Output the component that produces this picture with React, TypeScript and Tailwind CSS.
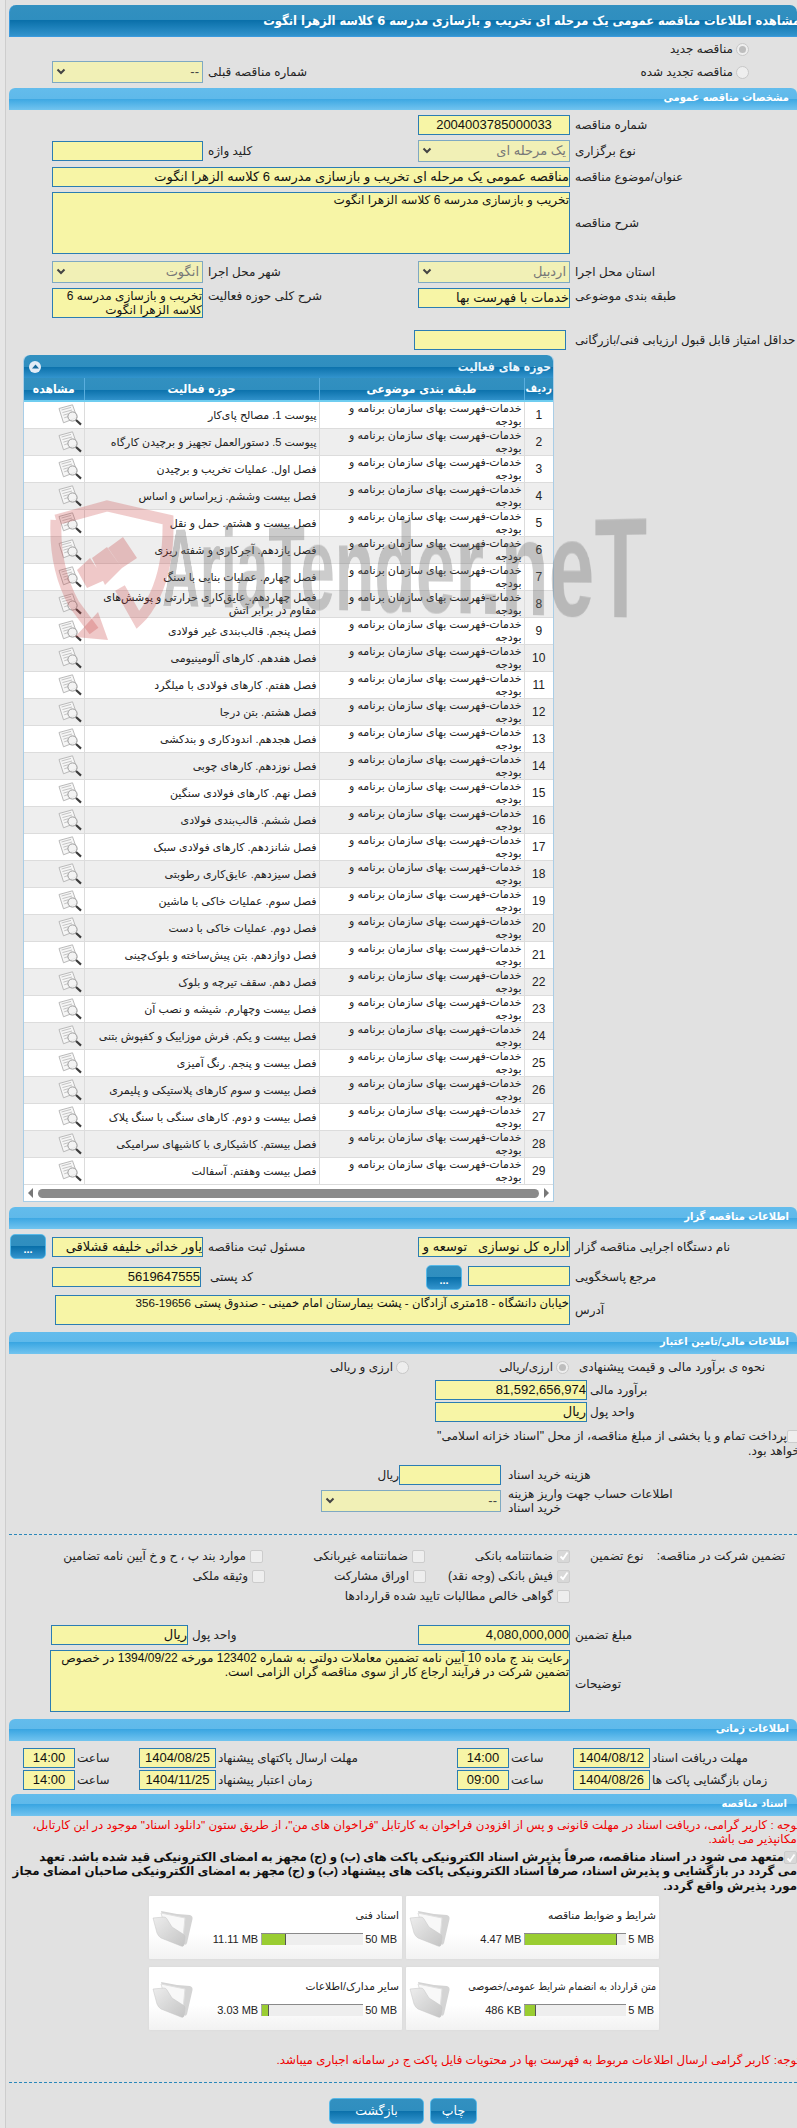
import type { ReactNode } from "react";

/* Tender detail page (read-only form). Everything is RTL, the right edge of the
   page slightly clips the long lines, same as the original. */

const bands = {
  dark: "bg-[linear-gradient(#3290c0_0%,#2f8ebf_50%,#0a70aa_50%,#3394cd_100%)]",
  light: "bg-[linear-gradient(#63bcec_0%,#5fb9ea_50%,#3aa6e2_50%,#6dc1ee_100%)]",
};

const narrow = "font-['DejaVu_Sans_Condensed','DejaVu_Sans',sans-serif] font-bold";

const rows = [
  "پیوست 1. مصالح پای‌کار",
  "پیوست 5. دستورالعمل تجهیز و برچیدن کارگاه",
  "فصل اول. عملیات تخریب و برچیدن",
  "فصل بیست وششم. زیراساس و اساس",
  "فصل بیست و هشتم. حمل و نقل",
  "فصل یازدهم. آجرکاری و شفته ریزی",
  "فصل چهارم. عملیات بنایی با سنگ",
  "فصل چهاردهم. عایق‌کاری حرارتی و پوشش‌های مقاوم در برابر آتش",
  "فصل پنجم. قالب‌بندی غیر فولادی",
  "فصل هفدهم. کارهای آلومینیومی",
  "فصل هفتم. کارهای فولادی با میلگرد",
  "فصل هشتم. بتن درجا",
  "فصل هجدهم. اندودکاری و بندکشی",
  "فصل نوزدهم. کارهای چوبی",
  "فصل نهم. کارهای فولادی سنگین",
  "فصل ششم. قالب‌بندی فولادی",
  "فصل شانزدهم. کارهای فولادی سبک",
  "فصل سیزدهم. عایق‌کاری رطوبتی",
  "فصل سوم. عملیات خاکی با ماشین",
  "فصل دوم. عملیات خاکی با دست",
  "فصل دوازدهم. بتن پیش‌ساخته و بلوک‌چینی",
  "فصل دهم. سقف تیرچه و بلوک",
  "فصل بیست وچهارم. شیشه و نصب آن",
  "فصل بیست و یکم. فرش موزاییک و کفپوش بتنی",
  "فصل بیست و پنجم. رنگ آمیزی",
  "فصل بیست و سوم کارهای پلاستیکی و پلیمری",
  "فصل بیست و دوم. کارهای سنگی با سنگ پلاک",
  "فصل بیستم. کاشیکاری با کاشیهای سرامیکی",
  "فصل بیست وهفتم. آسفالت",
];

const files = [
  { name: "شرایط و ضوابط مناقصه", used: "4.47 MB", max: "5 MB", pct: 91 },
  { name: "اسناد فنی", used: "11.11 MB", max: "50 MB", pct: 24 },
  { name: "متن قرارداد به انضمام شرایط عمومی/خصوصی", used: "486 KB", max: "5 MB", pct: 11, tight: true },
  { name: "سایر مدارک/اطلاعات", used: "3.03 MB", max: "50 MB", pct: 8 },
];

function Label({ children, className = "" }: { children: ReactNode; className?: string }) {
  return <div className={`text-left text-[12px] leading-[14px] text-[#222] ${className || "pl-[5px]"}`}>{children}</div>;
}

function Field({ children, className = "", center = false }: { children?: ReactNode; className?: string; center?: boolean }) {
  return (
    <div className={`h-[20px] overflow-hidden border border-[#2b7db3] bg-[#f7f5a6] text-[13px] leading-[18px] whitespace-pre text-[#111] ${center ? "text-center" : "text-right"} ${className}`}>
      {children}
    </div>
  );
}

function Area({ children, className = "" }: { children?: ReactNode; className?: string }) {
  return (
    <div className={`overflow-hidden border border-[#2b7db3] bg-[#f7f5a6] text-right leading-[14px] text-[#111] ${className}`}>
      {children}
    </div>
  );
}

function Select({ value, className = "", muted = false }: { value: string; className?: string; muted?: boolean }) {
  return (
    <div className={`flex h-[22px] items-center justify-between border border-[#7fa9c2] bg-[#f1f0b6] pr-[3px] pl-[3px] text-[13px] ${muted ? "text-[#777]" : "text-[#444]"} ${className}`}>
      <span>{value}</span>
      <svg width="10" height="7" viewBox="0 0 10 7" className="mb-[2px]">
        <path d="M1.5 1.5 5 5l3.5-3.5" fill="none" stroke="#444" strokeWidth="2" />
      </svg>
    </div>
  );
}

function Band({ title, className = "" }: { title: string; className?: string }) {
  return (
    <div className={`flex h-[22px] items-center rounded-t-[6px] border-b border-[#6fc3ee] text-[11px] text-white ${narrow} ${bands.light} ${className || "pr-[8px]"}`}>
      {title}
    </div>
  );
}

function Radio({ on = false }: { on?: boolean }) {
  return (
    <span className="flex size-[13px] shrink-0 items-center justify-center rounded-full border border-[#c8c8c8] bg-[#eeeeee]">
      {on && <span className="size-[7px] rounded-full bg-[#bdbdbd]" />}
    </span>
  );
}

function Check({ on = false, className = "" }: { on?: boolean; className?: string }) {
  return (
    <span className={`flex h-[13px] w-[13px] shrink-0 items-center justify-center rounded-[2px] border border-[#cccccc] ${on ? "bg-[#d8d8d8]" : "bg-[#eeeeee]"} ${className}`}>
      {on && (
        <svg width="10" height="10" viewBox="0 0 10 10">
          <path d="M1.5 5.5 4 8l4.5-6.5" fill="none" stroke="#fff" strokeWidth="1.8" />
        </svg>
      )}
    </span>
  );
}

function Opt({ on = false, children, className = "" }: { on?: boolean; children: ReactNode; className?: string }) {
  return (
    <div className={`flex items-center gap-[4px] text-[12px] text-[#222] ${className}`}>
      <Check on={on} />
      <span>{children}</span>
    </div>
  );
}

function BlueButton({ children, className = "" }: { children: ReactNode; className?: string }) {
  return (
    <button className={`rounded-[5px] border border-[#58b9e8] text-white ${bands.dark} ${className}`}>{children}</button>
  );
}

function DocIcon() {
  return (
    <svg width="24" height="22" viewBox="0 0 24 22" className="shrink-0">
      <path d="M1 4.5 14.5.8 19 13.5 5.5 18.8Z" fill="#f6f6f6" stroke="#b9b9b9" />
      <path d="M3.5 6 13 3.4M4.4 8.6 14 6M5.3 11.2 10.5 9.6M6.2 13.8 10 12.6" stroke="#c4c4c4" />
      <circle cx="14.5" cy="12.5" r="4.6" fill="#f2f2f2" fillOpacity="0.8" stroke="#9b9b9b" />
      <path d="m18 16 5 4.6" stroke="#3c3c3c" strokeWidth="2.2" />
    </svg>
  );
}

function FolderIcon() {
  return (
    <svg width="41" height="37" viewBox="0 0 41 37" className="shrink-0">
      <defs>
        <linearGradient id="folderFront" x1="0" y1="0" x2="1" y2="1">
          <stop offset="0" stopColor="#ededed" />
          <stop offset="1" stopColor="#c4c4c4" />
        </linearGradient>
      </defs>
      <path d="M9 1 25 4l13 1q3 1 2.5 4l-5.500 24q-1 3-3 1L14 20Z" fill="#d4d4d4" />
      <path d="M9 3 33 8l-2 20L14 20Z" fill="#f8f8f8" stroke="#e0e0e0" />
      <path d="M1 8 12 7q2 0 3 2l5 8 11 7q2 1 2 3l-1 8q-.5 2-3 1L9 28Q6 26 5 23Z" fill="url(#folderFront)" stroke="#c4c4c4" strokeWidth="0.5" />
    </svg>
  );
}

function FileCard({ name, used, max, pct, tight = false }: { name: string; used: string; max: string; pct: number; tight?: boolean }) {
  return (
    <div className="flex h-[63px] w-[253px] items-end gap-[3px] rounded-[1px] bg-[linear-gradient(#ffffff_60%,#f2f2f2_100%)] pr-[3px] pb-[12px] pl-[3px] shadow-[0_0_2px_#d5d5d5]">
      <div className="mb-[2px] min-w-0 flex-1">
        <div className={`text-right leading-[14px] whitespace-nowrap text-[#222] ${tight ? "font-['DejaVu_Sans_Condensed','DejaVu_Sans',sans-serif] text-[10.5px]" : "text-[10.7px]"}`}>
          {name}
        </div>
        <div className="mt-[11px] flex items-center gap-[2px] pr-[2px] text-[11px] leading-[12px] text-[#222]">
          <span dir="ltr">{max}</span>
          <div dir="ltr" className="ml-[1px] h-[12px] w-[102px] shrink-0 border-t border-[#8a8a8a] bg-[#eeeeee]">
            <div className="h-full border-x border-l-[#aaaaaa] border-r-[#555555] bg-[#9acd32]" style={{ width: `${pct}%` }} />
          </div>
          <span dir="ltr">{used}</span>
        </div>
      </div>
      <FolderIcon />
    </div>
  );
}

function Watermark() {
  return (
    <div className="pointer-events-none absolute top-[500px] left-[50px] h-[150px] w-[610px]">
      <svg width="125" height="147" viewBox="0 0 125 147" className="absolute top-0 left-0">
        <path
          d="M6 20 57 6l61 14q1 45-13 75-8 17-17 25L70 88M6 20q-2 48 18 84l20 27"
          fill="none"
          stroke="#c43a3a"
          strokeOpacity="0.26"
          strokeWidth="11"
        />
        <path
          d="M25 137 58 140 48 112ZM27 70 40 58 55 80 37 88ZM42 58 57 47 72 68 55 85ZM58 48 73 37 87 58 72 68Z"
          fill="#c43a3a"
          fillOpacity="0.28"
        />
      </svg>
      <div
        dir="ltr"
        className="absolute top-[5px] left-[-129px] origin-center text-[125px] leading-[125px] font-bold whitespace-nowrap text-[#6e6e6e]/35 [transform:perspective(700px)_rotateY(-22deg)_scaleX(0.57)]"
      >
        AriaTender.neT
      </div>
    </div>
  );
}

export default function App() {
  return (
    <div className="relative flex h-[2128px] w-[797px] overflow-hidden bg-[#e1e1e1] font-['Liberation_Sans','DejaVu_Sans',sans-serif]">
      <div className="h-full w-[6px] shrink-0 border-r border-[#cdcdcd] bg-[#e6e6e6]" />
      <div dir="rtl" className="ml-[3px] w-[788px] shrink-0 pt-[5px]">
        <div className={`flex h-[32px] items-center rounded-t-[7px] border-b border-l border-[#3a9ade] text-[12.800px] whitespace-nowrap text-white ${narrow} ${bands.dark}`}>
          <span className="-mr-[3px]">مشاهده اطلاعات مناقصه عمومی یک مرحله ای تخریب و بازسازی مدرسه 6 کلاسه الزهرا انگوت</span>
        </div>

        <div className="flex h-[24px] items-center gap-[3px] pr-[48px] text-[12px] text-[#222]">
          <Radio on />
          مناقصه جدید
        </div>
        <div className="grid h-[22px] grid-cols-[227px_152px_215px_151px] items-center">
          <div className="flex items-center gap-[3px] pr-[48px] text-[12px] text-[#222]">
            <Radio />
            مناقصه تجدید شده
          </div>
          <div />
          <Label>شماره مناقصه قبلی</Label>
          <Select value="--" />
        </div>

        <Band title="مشخصات مناقصه عمومی" className="mt-[5px] pr-[8px]" />

        <div className="mt-[5px] grid grid-cols-[227px_152px_215px_151px] items-center">
          <Label>شماره مناقصه</Label>
          <Field center>2004003785000033</Field>
        </div>
        <div className="mt-[5px] grid h-[22px] grid-cols-[227px_152px_215px_151px] items-center">
          <Label>نوع برگزاری</Label>
          <Select value="یک مرحله ای" muted />
          <Label>کلید واژه</Label>
          <Field />
        </div>
        <div className="mt-[5px] flex items-center">
          <Label className="w-[227px] shrink-0 pl-[5px]">عنوان/موضوع مناقصه</Label>
          <Field className="w-[518px]">مناقصه عمومی یک مرحله ای تخریب و بازسازی مدرسه 6 کلاسه الزهرا انگوت</Field>
        </div>
        <div className="mt-[5px] flex items-center">
          <Label className="w-[227px] shrink-0 pl-[5px]">شرح مناقصه</Label>
          <Area className="h-[62px] w-[518px] text-[12px]">تخریب و بازسازی مدرسه 6 کلاسه الزهرا انگوت</Area>
        </div>
        <div className="mt-[7px] grid h-[22px] grid-cols-[227px_152px_215px_151px] items-center">
          <Label>استان محل اجرا</Label>
          <Select value="اردبیل" muted />
          <Label>شهر محل اجرا</Label>
          <Select value="انگوت" muted />
        </div>
        <div className="mt-[5px] grid h-[30px] grid-cols-[227px_152px_215px_151px] items-start">
          <Label className="pt-[1px] pl-[5px]">طبقه بندی موضوعی</Label>
          <Field>خدمات با فهرست بها</Field>
          <Label className="pt-[1px] pl-[5px]">شرح کلی حوزه فعالیت</Label>
          <Area className="h-[30px] text-[12px]">تخریب و بازسازی مدرسه 6 کلاسه الزهرا انگوت</Area>
        </div>
        <div className="mt-[12px] grid grid-cols-[227px_156px] items-center">
          <Label className="pl-[5px] text-[11.5px]">حداقل امتیاز قابل قبول ارزیابی فنی/بازرگانی</Label>
          <Field className="mr-[4px] w-[152px]" />
        </div>

        {/* activity table */}
        <div className="mt-[5px] mr-[243px] w-[531px] rounded-t-[6px] border-x border-b border-[#a9cde6] bg-white">
          <div className={`flex h-[23px] items-center justify-between rounded-t-[6px] pr-[2px] pl-[5px] text-[12px] text-[#eaf6fd] ${narrow} ${bands.dark}`}>
            حوزه های فعالیت
            <span className="flex size-[12px] items-center justify-center rounded-full bg-[#e4ecf6]">
              <svg width="7" height="5" viewBox="0 0 7 5">
                <path d="M3.500 0.500 7 4.500H0Z" fill="#17699c" />
              </svg>
            </span>
          </div>
          <table className="w-full table-fixed border-collapse">
            <colgroup>
              <col className="w-[29px]" />
              <col className="w-[205px]" />
              <col className="w-[235px]" />
              <col />
            </colgroup>
            <thead>
              <tr className={`h-[23px] text-[12px] whitespace-nowrap text-white ${narrow} ${bands.dark}`}>
                <th className="border-b-2 border-l border-b-[#6fcdf0] border-l-[#5aaede] text-[11px] font-bold">ردیف</th>
                <th className="border-b-2 border-l border-b-[#6fcdf0] border-l-[#5aaede] font-bold">طبقه بندی موضوعی</th>
                <th className="border-b-2 border-l border-b-[#6fcdf0] border-l-[#5aaede] font-bold">حوزه فعالیت</th>
                <th className="border-b-2 border-b-[#6fcdf0] font-bold">مشاهده</th>
              </tr>
            </thead>
            <tbody>
              {rows.map((r, i) => (
                <tr key={r} className={`h-[27px] border-b border-[#dcdcdc] text-[#222] ${i % 2 ? "bg-[#eeeeee]" : "bg-white"}`}>
                  <td className="border-l border-[#dcdcdc] text-center text-[12px]">{i + 1}</td>
                  <td className="border-l border-[#dcdcdc] pr-[2px] pl-[4px] text-right text-[11px] leading-[13px]">
                    خدمات-فهرست بهای سازمان برنامه و
                    <br />
                    بودجه
                  </td>
                  <td className="border-l border-[#dcdcdc] pr-[2px] pl-[2px] text-right text-[11px] leading-[13px]">{r}</td>
                  <td className="p-0">
                    <div className="flex h-[26px] items-center justify-start pr-[2px]">
                      <DocIcon />
                    </div>
                  </td>
                </tr>
              ))}
            </tbody>
          </table>
          <div dir="ltr" className="flex h-[16px] items-center gap-[5px] px-[4px]">
            <span className="h-0 w-0 border-y-[5px] border-r-[5px] border-y-transparent border-r-[#777]" />
            <span className="h-[9px] flex-1 rounded-full bg-[#8a8a8a]" />
            <span className="h-0 w-0 border-y-[5px] border-l-[5px] border-y-transparent border-l-[#777]" />
          </div>
        </div>

        <Band title="اطلاعات مناقصه گزار" className="mt-[5px] pr-[8px]" />

        <div className="mt-[5px] grid h-[25px] grid-cols-[227px_152px_215px_151px_42px] items-center">
          <Label>نام دستگاه اجرایی مناقصه گزار</Label>
          <Field>اداره کل نوسازی   توسعه و تجهیز مدارس</Field>
          <Label>مسئول ثبت مناقصه</Label>
          <Field>یاور خدائی خلیفه قشلاقی</Field>
          <BlueButton className="mr-[6px] h-[25px] w-[36px] pt-[6px] text-[11px] font-bold">...</BlueButton>
        </div>
        <div className="mt-[5px] grid h-[26px] grid-cols-[227px_152px_215px_151px] items-center">
          <Label>مرجع پاسخگویی</Label>
          <div className="flex items-start gap-[6px]">
            <Field className="mt-[1px] w-[102px]" />
            <BlueButton className="h-[25px] w-[36px] pt-[6px] text-[11px] font-bold">...</BlueButton>
          </div>
          <Label className="pl-[7px]">کد پستی</Label>
          <Field className="mr-[2px] w-[149px]">5619647555</Field>
        </div>
        <div className="mt-[5px] flex items-center">
          <Label className="w-[227px] shrink-0 pl-[5px]">آدرس</Label>
          <Area className="h-[30px] w-[515px] text-[11.6px]">خیابان دانشگاه - 18متری آزادگان - پشت بیمارستان امام خمینی - صندوق پستی 19656-356</Area>
        </div>

        <Band title="اطلاعات مالی/تامین اعتبار" className="mt-[7px] pr-[8px]" />

        <div className="flex h-[26px] items-center text-[12px] text-[#222]">
          <div className="w-[227px] shrink-0 pr-[32px]">نحوه ی برآورد مالی و قیمت پیشنهادی</div>
          <div className="flex w-[161px] items-center gap-[3px] pr-[1px]">
            <Radio on />
            ارزی/ریالی
          </div>
          <div className="flex items-center gap-[3px]">
            <Radio />
            ارزی و ریالی
          </div>
        </div>
        <div className="flex items-center">
          <Label className="w-[210px] shrink-0 pl-[3px]">برآورد مالی</Label>
          <Field className="w-[152px]">81,592,656,974</Field>
        </div>
        <div className="mt-[2px] flex items-center">
          <Label className="w-[210px] shrink-0 pl-[3px]">واحد پول</Label>
          <Field className="w-[152px]">ریال</Field>
        </div>
        <div className="mt-[7px] -mr-[3px] h-[32px] text-[12.200px] leading-[15px] text-[#222]">
          <Check className="inline-flex align-middle" />
          پرداخت تمام و یا بخشی از مبلغ مناقصه، از محل "اسناد خزانه اسلامی"
          <br />
          خواهد بود.
        </div>
        <div className="mt-[4px] flex items-center">
          <Label className="w-[296px] shrink-0 pl-[7px]">هزینه خرید اسناد</Label>
          <Field className="w-[102px]" />
          <span className="text-[12px] text-[#222]">ریال</span>
        </div>
        <div className="mt-[5px] flex h-[22px] items-center">
          <Label className="w-[296px] shrink-0 pl-[7px]">
            اطلاعات حساب جهت واریز هزینه
            <br />
            خرید اسناد
          </Label>
          <Select value="--" className="w-[180px]" />
        </div>

        <div className="mt-[22px] border-t border-dashed border-[#2b88ba]" />

        <div className="mt-[11px] flex">
          <div className="flex h-[20px] w-[227px] shrink-0 items-center justify-between pr-[12px] pl-[20px] text-[12px] text-[#222]">
            <span>تضمین شرکت در مناقصه:</span>
            <span>نوع تضمین</span>
          </div>
          <div className="grid auto-rows-[20px] grid-cols-[145px_162px_1fr] items-center">
            <Opt on>ضمانتنامه بانکی</Opt>
            <Opt>ضمانتنامه غیربانکی</Opt>
            <Opt>موارد بند پ ، ح و خ آیین نامه تضامین</Opt>
            <Opt on>فیش بانکی (وجه نقد)</Opt>
            <Opt className="-mr-[1px]">اوراق مشارکت</Opt>
            <Opt className="-mr-[2px]">وثیقه ملکی</Opt>
            <Opt className="col-span-3">گواهی خالص مطالبات تایید شده قراردادها</Opt>
          </div>
        </div>

        <div className="mt-[19px] grid grid-cols-[227px_152px_230px_137px] items-center">
          <Label>مبلغ تضمین</Label>
          <Field>4,080,000,000</Field>
          <Label className="pl-[4px]">واحد پول</Label>
          <Field>ریال</Field>
        </div>
        <div className="mt-[5px] flex items-center">
          <Label className="w-[227px] shrink-0 pt-[6px] pl-[5px]">توضیحات</Label>
          <Area className="h-[62px] w-[520px] text-[12px]">
            رعایت بند ج ماده 10 آیین نامه تضمین معاملات دولتی به شماره 123402 مورخه 1394/09/22 در خصوص تضمین شرکت در فرآیند ارجاع کار از سوی مناقصه گران الزامی است.
          </Area>
        </div>

        <Band title="اطلاعات زمانی" className="mt-[7px] pr-[8px]" />

        <div className="mt-[7px] grid grid-cols-[147px_77px_64px_52px_241px_77px_64px_52px] items-center gap-y-[2px]">
          <Label className="pl-[2px]">مهلت دریافت اسناد</Label>
          <Field center>1404/08/12</Field>
          <Label className="pl-[2px]">ساعت</Label>
          <Field center>14:00</Field>
          <Label className="pl-[2px]">مهلت ارسال پاکتهای پیشنهاد</Label>
          <Field center>1404/08/25</Field>
          <Label className="pl-[2px]">ساعت</Label>
          <Field center>14:00</Field>
          <Label className="pl-[2px]">زمان بازگشایی پاکت ها</Label>
          <Field center>1404/08/26</Field>
          <Label className="pl-[2px]">ساعت</Label>
          <Field center>09:00</Field>
          <Label className="pl-[2px]">زمان اعتبار پیشنهاد</Label>
          <Field center>1404/11/25</Field>
          <Label className="pl-[2px]">ساعت</Label>
          <Field center>14:00</Field>
        </div>

        <Band title="اسناد مناقصه" className="mt-[4px] w-[786px] pr-[10px]" />

        <div className="mt-[2px] -mr-[3px] text-[11.800px] leading-[14px] whitespace-nowrap text-[#f00000]">
          توجه : کاربر گرامی، دریافت اسناد در مهلت قانونی و پس از افزودن فراخوان به کارتابل "فراخوان های من"، از طریق ستون "دانلود اسناد" موجود در این کارتابل،
          <br />
          امکانپذیر می باشد.
        </div>
        <div className="mt-[4px] h-[43px] text-[11.800px] leading-[14.300px] font-bold whitespace-nowrap text-[#111]">
          <Check on className="inline-flex align-middle" />
          متعهد می شود در اسناد مناقصه، صرفاً پذیرش اسناد الکترونیکی پاکت های (ب) و (ج) مجهز به امضای الکترونیکی قید شده باشد. تعهد
          <br />
          می گردد در بازگشایی و پذیرش اسناد، صرفاً اسناد الکترونیکی پاکت های پیشنهاد (ب) و (ج) مجهز به امضای الکترونیکی صاحبان امضای مجاز
          <br />
          مورد پذیرش واقع گردد.
        </div>

        <div className="mt-[3px] mr-[138px] grid w-[510px] grid-cols-2 gap-x-[4px] gap-y-[8px]">
          {files.map((f) => (
            <FileCard key={f.name} {...f} />
          ))}
        </div>

        <div className="mt-[22px] -mr-[3px] h-[16px] text-[11.800px] leading-[16px] whitespace-nowrap text-[#f00000]">
          توجه: کاربر گرامی ارسال اطلاعات مربوط به فهرست بها در محتویات فایل پاکت ج در سامانه اجباری میباشد.
        </div>

        <div className="mt-[14px] border-t border-dashed border-[#2b88ba]" />

        <div className="mt-[15px] mr-[320px] flex gap-[6px]">
          <BlueButton className="h-[26px] w-[47px] text-[12.5px]">چاپ</BlueButton>
          <BlueButton className="h-[26px] w-[95px] text-[12.5px]">بازگشت</BlueButton>
        </div>
      </div>
      <Watermark />
    </div>
  );
}
